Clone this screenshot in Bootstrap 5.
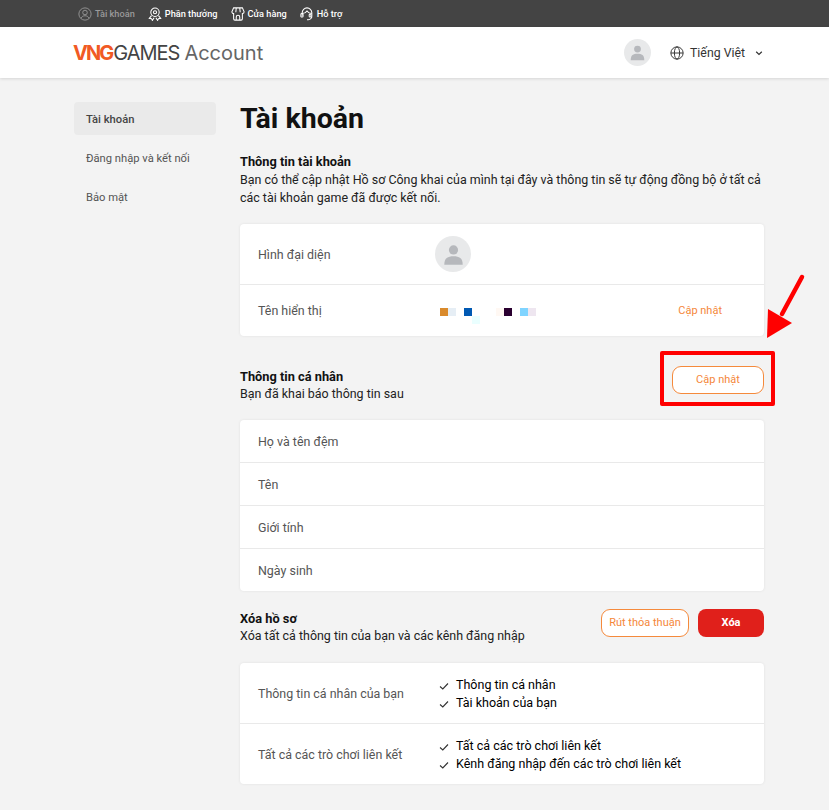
<!doctype html>
<html lang="vi"><head><meta charset="utf-8"><title>VNGGames Account</title>
<link href="https://cdn.jsdelivr.net/npm/bootstrap@5.3.0/dist/css/bootstrap.min.css" rel="stylesheet">
<style>
html,body{height:810px;overflow:hidden}
body{background:#f3f3f3;font-family:"Roboto",sans-serif;font-size:12.45px;color:#111;position:relative}
.topstrip{height:27px;background:#444;padding-left:78px;gap:13px;color:#fff;font-size:9.2px;font-weight:500}
.topstrip .dim{color:#9a9a9a}
.topstrip svg{width:14px;height:14px;margin-right:3px}
.headbar{height:51px;background:#fff;box-shadow:0 1px 3px rgba(0,0,0,.12);padding:0 66px 0 73px}
.logo{font-family:"Inter",sans-serif;font-size:20px;line-height:1}
.logo .o{color:#f15a24;font-weight:700;letter-spacing:-2px}
.logo .g{color:#444;font-weight:400;letter-spacing:-1px;margin-left:1px}
.logo .a{color:#666;margin-left:5px;font-weight:400}
.avatar-disc{border-radius:50%;background:#e8e9ea;display:flex;align-items:center;justify-content:center;flex:none}
.disc-sm{width:27px;height:27px}
.disc-lg{width:36px;height:36px;margin-top:-2px}
.headright{gap:19px}
.lang{font-size:12.3px;color:#333;gap:6px;padding-top:1px}
.lang .chev{margin-left:4px}
.frame{width:690px;margin-left:74px;gap:24px;padding-top:24px}
.sidemenu{width:142px;flex:none}
.sidemenu a{display:block;height:33px;line-height:35px;margin-bottom:6px;padding-left:12px;color:#555;text-decoration:none;font-size:11.2px;border-radius:4px}
.sidemenu a.on{background:#eaeaea;color:#444;font-weight:500}
.pagebody{width:524px;flex:none}
h1.ptitle{font-size:28.5px;font-weight:700;margin:0;line-height:34px;height:34px}
.sechead{font-weight:700;line-height:17px;font-size:12.8px}
.secsub{line-height:18px;color:#222}
.intro-head{margin-top:17px}
.intro-sub{padding-top:1px}
.panel{background:#fff;border-radius:4px;box-shadow:0 0 3px rgba(0,0,0,.08)}
.gap-top-17{margin-top:17px}
.gap-top-18{margin-top:18px}
.gap-top-30{margin-top:30px}
.rowline{padding:2px 18px 0;border-bottom:1px solid #e9e9e9;color:#555;align-items:center;display:flex}
.rowline:last-child{border-bottom:0}
.h61{height:61px}.h60{height:60px}.h51{height:51px}.h43{height:43px}.h42{height:42px}
.rowkey{width:177px;flex:none;color:#555}
.rowkey.wide{width:181px}
.blockpad2{padding-top:2px}.blockpad1{padding-top:1px}
.pix{display:grid;grid-template-columns:repeat(12,8px);grid-auto-rows:8px;margin:8px 0 0 5px}
.p1{background:#d98a2c}.p2{background:#e6eef5}.p3{background:#0059b3}.p4{background:#fff8f3}.p5{background:#2a0030}.p6{background:#80d4ff}.p7{background:#eee6f0}.p8{background:#eaffff}
.pill{font-size:11px;border:1px solid #f58a3c;color:#f5873a;background:#fff;border-radius:9px;padding:0;height:28px;text-align:center;line-height:26px;--bs-btn-hover-color:#f5873a}
.w92{width:92px}.w88{width:88px}
.redbtn{background:#e0201b;color:#fff;border:0;font-weight:700;font-size:11px;border-radius:8px;height:28px;width:66px}
.btnpair{gap:9px}
.linkish{color:#f5873a;font-size:11px;margin-right:24px}
.chk{line-height:18px;color:#000;font-size:12.5px}
.chk svg{width:10px;height:10px;margin-right:7px}
.callout{position:absolute;left:660px;top:351px;width:115px;height:55px;border:4px solid #f00;border-radius:2px}
.arrow{position:absolute;left:760px;top:270px;width:50px;height:75px}
</style></head>
<body>
<div class="topstrip d-flex align-items-center">
 <span class="d-flex align-items-center dim"><svg viewBox="0 0 16 16" fill="none" stroke="#9a9a9a" stroke-width="1"><circle cx="8" cy="8" r="7"/><circle cx="8" cy="6.300" r="2.600"/><path d="M3.500 13c.8-2.200 2.500-3 4.500-3s3.700.8 4.500 3"/></svg>Tài khoản</span>
 <span class="d-flex align-items-center"><svg viewBox="0 0 16 16" fill="none" stroke="#fff" stroke-width="1.200"><circle cx="8" cy="6" r="4.800"/><circle cx="8" cy="6" r="1.800"/><path d="M4 9.800 1.500 13l2.500.3 1 2 2-3M12 9.800l2.500 3.200-2.500.3-1 2-2-3"/></svg>Phần thưởng</span>
 <span class="d-flex align-items-center"><svg viewBox="0 0 16 16" fill="none" stroke="#fff" stroke-width="1.200"><path d="M3 1h10l2 4.500a2 2 0 0 1-2 2v6a1.500 1.500 0 0 1-1.500 1.500h-7A1.500 1.500 0 0 1 3 13.500v-6a2 2 0 0 1-2-2zM6 1 5.500 6M10 1l.5 5M6 15v-3.500a2 2 0 0 1 4 0V15"/></svg>Cửa hàng</span>
 <span class="d-flex align-items-center"><svg viewBox="0 0 16 16" fill="none" stroke="#fff" stroke-width="1.200"><path d="M2.500 10V6.500a5.500 5.500 0 0 1 11 0V10a4 4 0 0 1-4 4.500H8"/><path d="M2.500 7.500C5 7.500 7 6 8 4.500c1 1.500 3 3 5.500 3"/><rect x="1" y="7.500" width="2.500" height="4" rx="1"/><rect x="10.500" y="8" width="2" height="3.500" rx="1"/></svg>Hỗ trợ</span>
</div>
<header class="headbar d-flex align-items-center justify-content-between">
 <div class="logo"><span class="o">VNG</span><span class="g">GAMES</span><span class="a">Account</span></div>
 <div class="headright d-flex align-items-center">
  <div class="avatar-disc disc-sm"><svg width="17" height="17" viewBox="0 0 20 20" fill="#b6b8bc"><circle cx="10" cy="6" r="4"/><path d="M2 19c0-6 3-7.500 8-7.500s8 1.500 8 7.500z"/></svg></div>
  <div class="lang d-flex align-items-center"><svg width="14" height="14" viewBox="0 0 16 16" fill="none" stroke="#333" stroke-width="1.100"><circle cx="8" cy="8" r="7"/><ellipse cx="8" cy="8" rx="3" ry="7"/><path d="M1 8h14"/></svg><span>Tiếng Việt</span><svg class="chev" width="8" height="8" viewBox="0 0 8 8" fill="none" stroke="#333" stroke-width="1.200"><path d="M1.200 2.800 4 5.500l2.800-2.700"/></svg></div>
 </div>
</header>
<main class="frame d-flex">
 <nav class="sidemenu"><a class="on" href="#">Tài khoản</a><a href="#">Đăng nhập và kết nối</a><a href="#">Bảo mật</a></nav>
 <div class="pagebody">
  <h1 class="ptitle">Tài khoản</h1>
  <div class="sechead intro-head">Thông tin tài khoản</div>
  <div class="secsub intro-sub">Bạn có thể cập nhật Hồ sơ Công khai của mình tại đây và thông tin sẽ tự động đồng bộ ở tất cả<br>các tài khoản game đã được kết nối.</div>
  <div class="panel gap-top-17">
   <div class="rowline h61"><div class="rowkey">Hình đại diện</div><div class="avatar-disc disc-lg"><svg width="23" height="23" viewBox="0 0 20 20" fill="#b6b8bc"><circle cx="10" cy="6" r="4"/><path d="M2 19c0-6 3-7.500 8-7.500s8 1.500 8 7.500z"/></svg></div></div>
   <div class="rowline h51"><div class="rowkey">Tên hiển thị</div>
    <div class="pix flex-grow-1">
     <i class="p1"></i><i class="p2"></i><i></i><i class="p3"></i><i></i><i></i><i></i><i class="p4"></i><i class="p5"></i><i></i><i class="p6"></i><i class="p7"></i>
     <i></i><i></i><i></i><i></i><i class="p8"></i>
    </div>
    <span class="linkish">Cập nhật</span></div>
  </div>
  <div class="d-flex justify-content-between align-items-start gap-top-30">
   <div class="blockpad2"><div class="sechead">Thông tin cá nhân</div><div class="secsub">Bạn đã khai báo thông tin sau</div></div>
   <button class="btn pill w92">Cập nhật</button>
  </div>
  <div class="panel gap-top-17">
   <div class="rowline h43">Họ và tên đệm</div>
   <div class="rowline h43">Tên</div>
   <div class="rowline h43">Giới tính</div>
   <div class="rowline h42">Ngày sinh</div>
  </div>
  <div class="d-flex justify-content-between align-items-start gap-top-18">
   <div class="blockpad1"><div class="sechead">Xóa hồ sơ</div><div class="secsub">Xóa tất cả thông tin của bạn và các kênh đăng nhập</div></div>
   <div class="btnpair d-flex"><button class="btn pill w88">Rút thỏa thuận</button><button class="btn redbtn">Xóa</button></div>
  </div>
  <div class="panel gap-top-18">
   <div class="rowline h61"><div class="rowkey wide">Thông tin cá nhân của bạn</div><div class="chk"><div><svg viewBox="0 0 10 10" fill="none" stroke="#333" stroke-width="1.100"><path d="M1 5.500 3.800 8 9 2.500"/></svg>Thông tin cá nhân</div><div><svg viewBox="0 0 10 10" fill="none" stroke="#333" stroke-width="1.100"><path d="M1 5.500 3.800 8 9 2.500"/></svg>Tài khoản của bạn</div></div></div>
   <div class="rowline h60"><div class="rowkey wide">Tất cả các trò chơi liên kết</div><div class="chk"><div><svg viewBox="0 0 10 10" fill="none" stroke="#333" stroke-width="1.100"><path d="M1 5.500 3.800 8 9 2.500"/></svg>Tất cả các trò chơi liên kết</div><div><svg viewBox="0 0 10 10" fill="none" stroke="#333" stroke-width="1.100"><path d="M1 5.500 3.800 8 9 2.500"/></svg>Kênh đăng nhập đến các trò chơi liên kết</div></div></div>
  </div>
 </div>
</main>
<div class="callout"></div>
<svg class="arrow" viewBox="0 0 50 75"><path d="M42 7 22 44" stroke="#f00" stroke-width="4.500" stroke-linecap="round"/><path d="M7 68 8 39 32 53z" fill="#f00"/></svg>
</body></html>
